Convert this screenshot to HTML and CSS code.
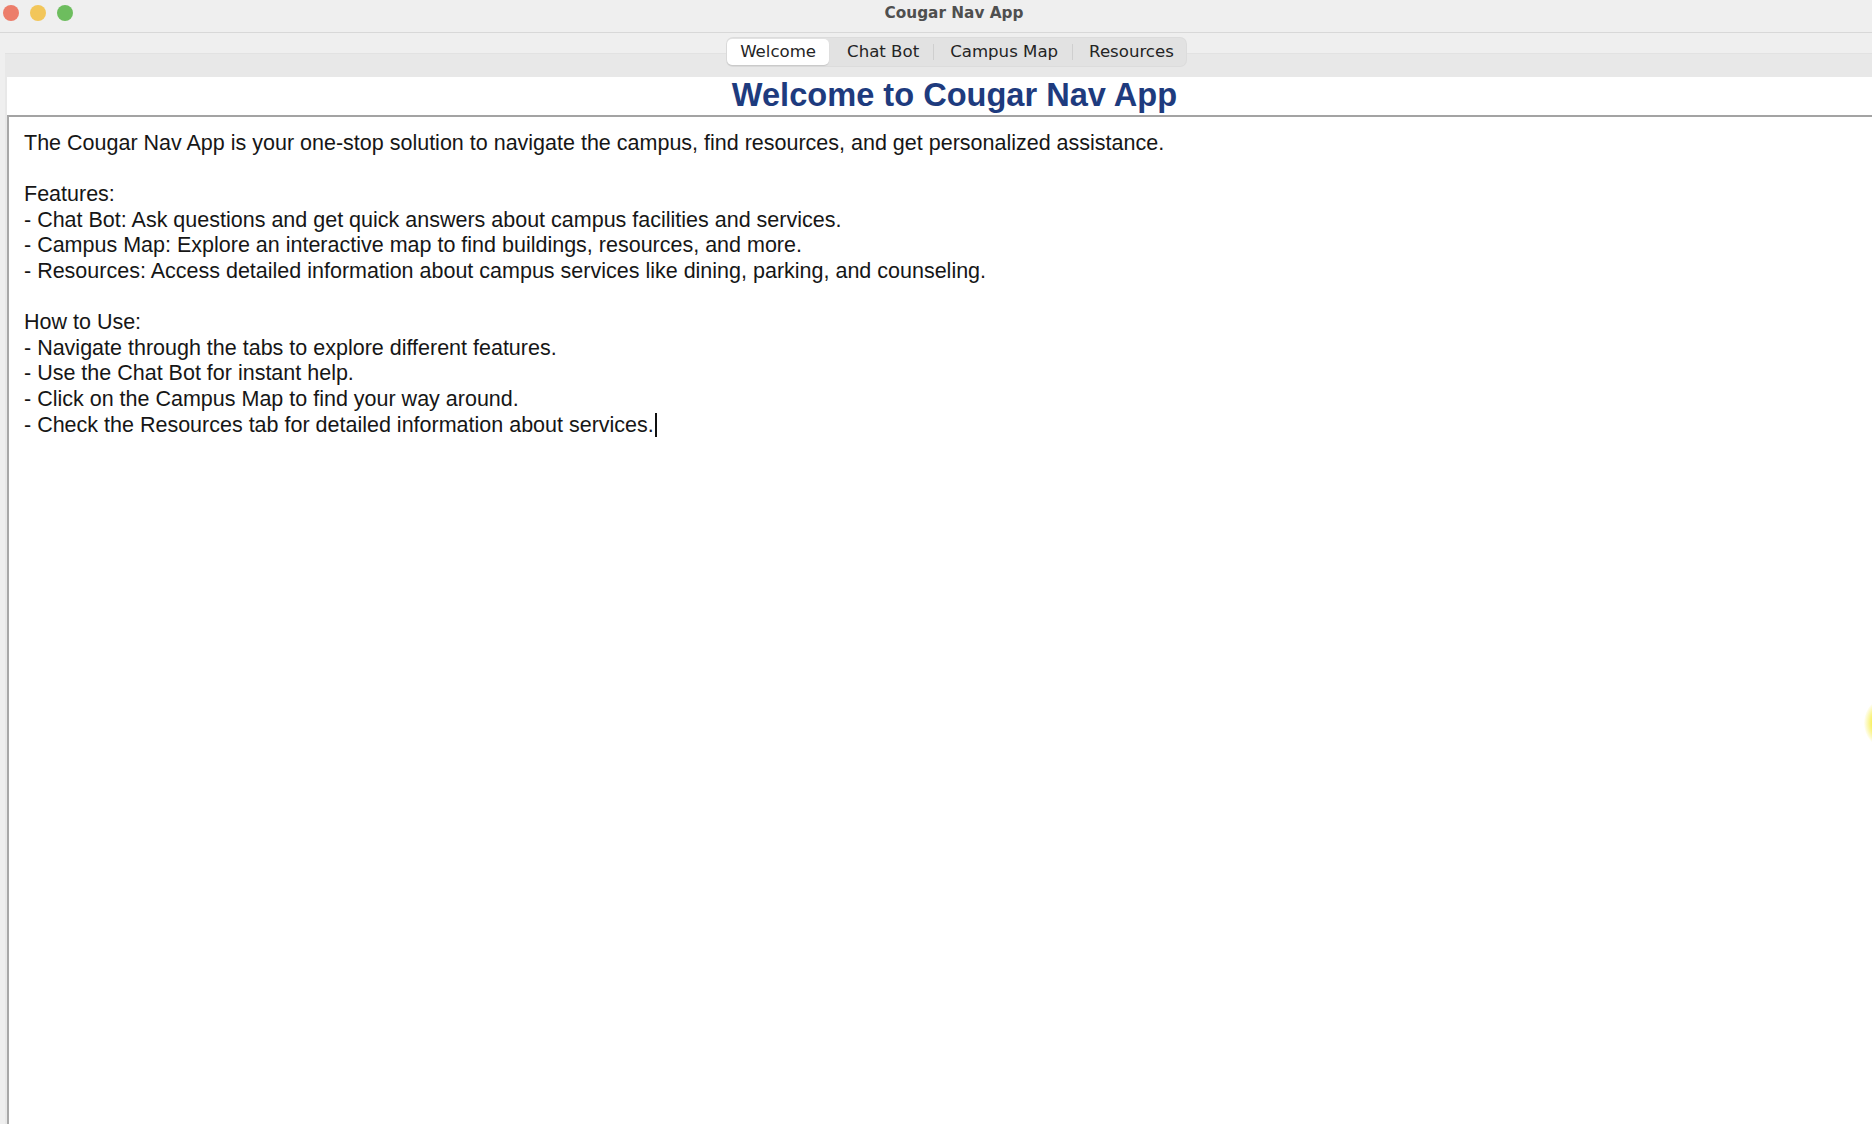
FILE: index.html
```html
<!DOCTYPE html>
<html lang="en">
<head>
<meta charset="utf-8">
<title>Cougar Nav App</title>
<link rel="stylesheet" href="styles.css">
</head>
<body>
<div class="window">
  <header class="titlebar">
    <div class="lights">
      <span class="light red"></span>
      <span class="light yellow"></span>
      <span class="light green"></span>
    </div>
    <div class="title">Cougar Nav App</div>
    <div></div>
  </header>
  <main class="body">
    <section class="pane">
      <nav class="tabs">
        <span class="tab selected">Welcome</span>
        <span class="tab">Chat Bot</span>
        <span class="sep"></span>
        <span class="tab">Campus Map</span>
        <span class="sep"></span>
        <span class="tab last">Resources</span>
      </nav>
      <div class="content">
        <div class="heading-panel">
          <h1 class="heading">Welcome to Cougar Nav App</h1>
        </div>
        <div class="textarea">
          <p class="line">The Cougar Nav App is your one-stop solution to navigate the campus, find resources, and get personalized assistance.</p>
          <p class="line blank"></p>
          <p class="line">Features:</p>
          <p class="line">- Chat Bot: Ask questions and get quick answers about campus facilities and services.</p>
          <p class="line">- Campus Map: Explore an interactive map to find buildings, resources, and more.</p>
          <p class="line">- Resources: Access detailed information about campus services like dining, parking, and counseling.</p>
          <p class="line blank"></p>
          <p class="line">How to Use:</p>
          <p class="line">- Navigate through the tabs to explore different features.</p>
          <p class="line">- Use the Chat Bot for instant help.</p>
          <p class="line">- Click on the Campus Map to find your way around.</p>
          <p class="line">- Check the Resources tab for detailed information about services.<span class="caret"></span></p>
        </div>
      </div>
    </section>
  </main>
</div>
<div class="cursor-glow"></div>
</body>
</html>
```

FILE: styles.css
```css
html, body {
  margin: 0;
  padding: 0;
  height: 100%;
  overflow: hidden;
  background: #ffffff;
}

.window {
  width: 1908px;
  height: 1124px;
  background: #efefef;
  display: flex;
  flex-direction: column;
}

.titlebar {
  height: 32px;
  flex: none;
  border-bottom: 1px solid #d8d8d8;
  background: #efefef;
  display: grid;
  grid-template-columns: 1fr auto 1fr;
  align-items: center;
}

.lights {
  display: flex;
  gap: 11px;
  padding-left: 3px;
  margin-top: -6px;
}

.light {
  width: 16px;
  height: 16px;
  border-radius: 50%;
  display: block;
}
.light.red { background: #ec7d6a; }
.light.yellow { background: #f2c65a; }
.light.green { background: #6dbd5e; }

.title {
  font-family: "DejaVu Sans", sans-serif;
  font-weight: bold;
  font-size: 15.3px;
  color: #4f4f4f;
  margin-top: -7px;
}

.body {
  flex: 1;
  padding-top: 20px;
  display: flex;
  flex-direction: column;
}

.pane {
  flex: 1;
  margin-left: 5px;
  background: #e8e8e8;
  border-top: 1px solid #e2e2e2;
  display: flex;
  flex-direction: column;
}

.tabs {
  align-self: center;
  margin-top: -16px;
  margin-bottom: 11px;
  height: 28px;
  display: flex;
  align-items: center;
  background: #e2e2e2;
  border-radius: 6px;
  box-shadow: 0 0 0 1px #dcdcdc;
  font-family: "DejaVu Sans", sans-serif;
  font-size: 16.6px;
  color: #242424;
}

.tab {
  height: 26px;
  line-height: 26px;
  padding: 0 14px 0 16px;
  border-radius: 5px;
}

.tab.selected {
  background: #ffffff;
  padding: 0 13px;
  margin-right: 2px;
  box-shadow: 0 1px 1px rgba(0,0,0,0.12);
}

.tab.last {
  padding-right: 12px;
}

.sep {
  width: 1px;
  height: 16px;
  background: #cfcfcf;
}

.content {
  flex: 1;
  margin-left: 2px;
  background: #ffffff;
  display: flex;
  flex-direction: column;
}

.heading-panel {
  height: 38px;
  display: flex;
  justify-content: center;
  align-items: center;
}

.heading {
  margin: 0 6px 0 0;
  font-family: "Liberation Sans", Arial, sans-serif;
  font-weight: bold;
  font-size: 32.6px;
  line-height: 38px;
  color: #1e3b7e;
  padding-bottom: 3px;
}

.textarea {
  flex: 1;
  border-top: 2px solid #a3a3a3;
  border-left: 2px solid #a8a8a8;
  padding: 14px 0 0 15px;
  font-family: "Liberation Sans", Arial, sans-serif;
  font-size: 21.5px;
  line-height: 25.6px;
  color: #161616;
}

.line {
  margin: 0;
  white-space: pre;
  height: 25.6px;
}

.caret {
  display: inline-block;
  width: 2px;
  height: 24px;
  background: #111;
  vertical-align: -5px;
  margin-left: 1px;
}

.cursor-glow {
  position: absolute;
  left: 1864px;
  top: 698px;
  width: 44px;
  height: 50px;
  border-radius: 50%;
  background: radial-gradient(ellipse at center, #f6ee3a 0%, #f8f060 45%, rgba(255,250,120,0) 72%);
}
```
